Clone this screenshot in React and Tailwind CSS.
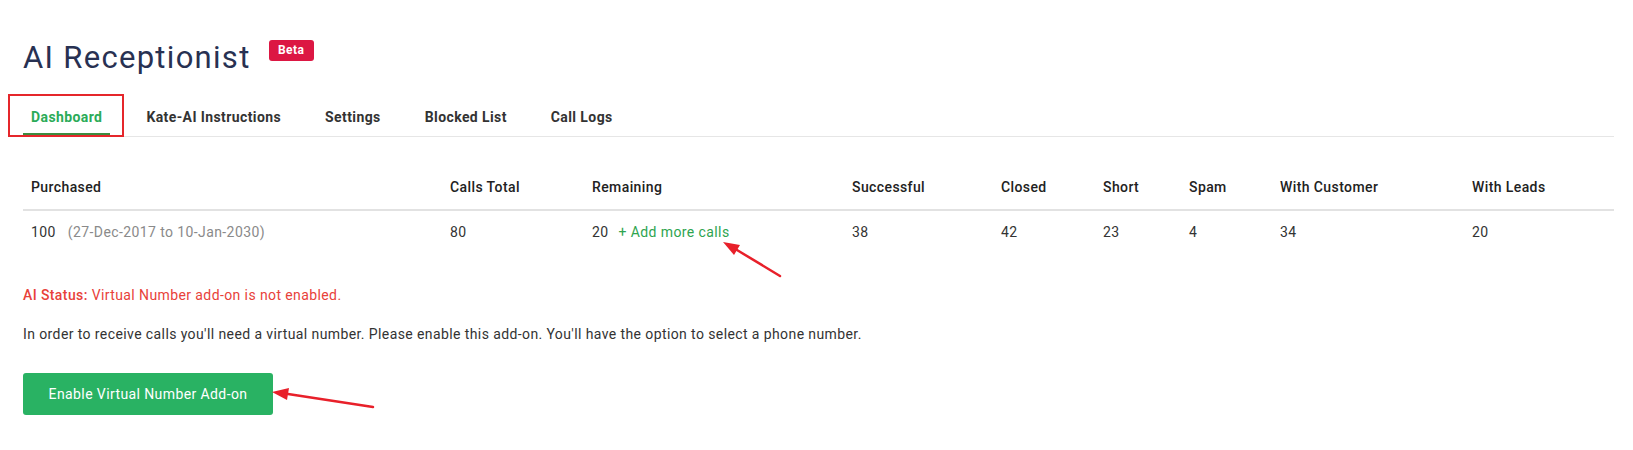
import React from 'react';

const tabs = ['Dashboard', 'Kate-AI Instructions', 'Settings', 'Blocked List', 'Call Logs'];

const cols = [
  { label: 'Purchased' },
  { label: 'Calls Total' },
  { label: 'Remaining' },
  { label: 'Successful' },
  { label: 'Closed' },
  { label: 'Short' },
  { label: 'Spam' },
  { label: 'With Customer' },
  { label: 'With Leads' },
];

const gridCols = 'grid grid-cols-[419px_142px_260px_149px_102px_86px_91px_192px_1fr]';

const Arrows = () => (
  <svg className="absolute inset-0 pointer-events-none" width="1633" height="450" viewBox="0 0 1633 450">
    <line x1="780" y1="276" x2="737" y2="250" stroke="#e8202a" strokeWidth="2.5" strokeLinecap="round" />
    <polygon points="723,242 740,245 734,255" fill="#e8202a" />
    <line x1="373" y1="407" x2="288" y2="394" stroke="#e8202a" strokeWidth="2.5" strokeLinecap="round" />
    <polygon points="272,392 289,388 287,400" fill="#e8202a" />
  </svg>
);

export default function App() {
  return (
    <div className="relative w-[1633px] h-[450px] bg-white font-['Roboto','Liberation_Sans',sans-serif] tracking-[0.4px] pl-[23px] pr-[19px] overflow-hidden">
      {/* title */}
      <div className="pt-[40px] flex items-start">
        <h1 className="text-[31px] leading-[36px] tracking-[1.3px] text-[#283152] font-normal">AI Receptionist</h1>
        <span className="ml-[18px] mt-[0px] h-[21px] w-[45px] text-center rounded-[3px] bg-[#dc1743] text-white text-[12px] font-bold leading-[21px]">
          Beta
        </span>
      </div>

      {/* tabs */}
      <div className="mt-[22px] flex gap-[28px] border-b border-[#e6e6e6]">
        {tabs.map((t, i) => (
          <div
            key={t}
            className={
              i === 0
                ? 'relative h-[38px] flex items-center px-2 pt-[3px] text-[14px] font-bold text-[#2bab58] border-b-[3px] border-[#3d8a3f]'
                : 'h-[38px] flex items-center px-2 text-[14px] font-bold text-[#333]'
            }
          >
            {t}
            {i === 0 && (
              <div className="absolute -left-[15px] -right-[14px] -top-[4px] -bottom-[4px] border-2 border-[#e5262b]" />
            )}
          </div>
        ))}
      </div>

      {/* table */}
      <div className="mt-[28px] text-[14px]">
        <div className={`${gridCols} h-[46px] items-center border-b-2 border-[#e2e2e2] font-medium text-[#222]`}>
          {cols.map((c) => (
            <div key={c.label} className="px-2">{c.label}</div>
          ))}
        </div>
        <div className={`${gridCols} h-[42px] items-center text-[#333]`}>
          <div className="px-2">
            100<span className="ml-3 text-[#8a8a8a]">(27-Dec-2017 to 10-Jan-2030)</span>
          </div>
          <div className="px-2">80</div>
          <div className="px-2">
            20<span className="ml-[10px] text-[#2ea44f]">+ Add more calls</span>
          </div>
          <div className="px-2">38</div>
          <div className="px-2">42</div>
          <div className="px-2">23</div>
          <div className="px-2">4</div>
          <div className="px-2">34</div>
          <div className="px-2">20</div>
        </div>
      </div>

      <p className="mt-[32px] text-[14px] leading-[20px] text-[#e8413a]">
        <span className="font-medium">AI Status:</span> Virtual Number add-on is not enabled.
      </p>
      <p className="mt-[19px] text-[14px] leading-[20px] text-[#333]">
        In order to receive calls you'll need a virtual number. Please enable this add-on. You'll have the option to select a phone number.
      </p>
      <button className="mt-[29px] w-[250px] h-[42px] rounded-[3px] bg-[#29b263] text-white text-[14px] font-normal">
        Enable Virtual Number Add-on
      </button>

      <Arrows />
    </div>
  );
}
